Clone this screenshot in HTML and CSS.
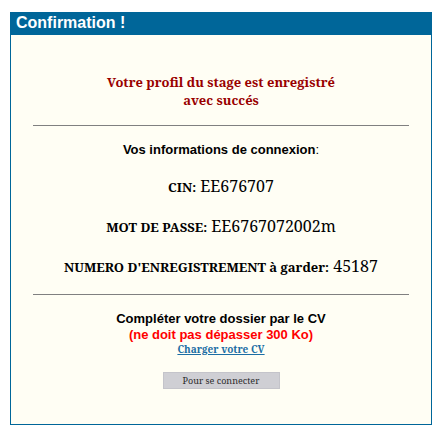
FILE: index.html
```html
<!DOCTYPE html>
<html lang="fr">
<head>
<meta charset="utf-8">
<title>Confirmation</title>
<link rel="stylesheet" href="styles.css">
</head>
<body>
<div class="panel">
  <div class="panel-head">Confirmation !</div>
  <div class="panel-body">
    <p class="success">Votre profil du stage est enregistré<br>avec succés</p>
    <hr class="sep">
    <p class="info-title"><b>Vos informations de connexion</b>:</p>
    <p class="field"><span class="label">CIN:</span> <span class="value">EE676707</span></p>
    <p class="field"><span class="label">MOT DE PASSE:</span> <span class="value">EE6767072002m</span></p>
    <p class="field"><span class="label">NUMERO D'ENREGISTREMENT à garder:</span> <span class="value">45187</span></p>
    <hr class="sep sep-bottom">
    <div class="cv">
      <div class="cv-title">Compléter votre dossier par le CV</div>
      <div class="cv-limit">(ne doit pas dépasser 300 Ko)</div>
      <div class="cv-line"><a class="cv-link" href="#">Charger votre CV</a></div>
    </div>
    <div class="actions"><button class="btn" type="button">Pour se connecter</button></div>
  </div>
</div>
</body>
</html>
```
FILE: styles.css
```css
html, body { margin: 0; padding: 0; background: #ffffff; }
body { font-family: "Noto Serif", "DejaVu Serif Condensed", serif; }
.panel {
  margin: 12px 10px 0 10px;
  border: 1px solid #006699;
  background: #fffef4;
  height: 413px;
  box-sizing: border-box;
}
.panel-head {
  background: #006699;
  color: #ffffff;
  font-family: "Liberation Sans", Arial, sans-serif;
  font-weight: bold;
  font-size: 16px;
  height: 22px;
  line-height: 20px;
  padding-left: 5px;
}
.panel-body { text-align: center; padding: 0 22px; }
.success {
  margin: 38px 0 0 0;
  color: #990000;
  font-weight: bold;
  font-size: 13px;
  line-height: 18px;
}
.sep {
  border: 0;
  border-top: 1px solid #808080;
  margin: 16px 0 0 0;
  height: 0;
}
.info-title {
  font-family: "Liberation Sans", Arial, sans-serif;
  font-size: 13px;
  margin: 16px 0 0 0;
  line-height: 16px;
}
.field { margin: 17px 0 0 0; line-height: 22px; }
.label { font-weight: bold; font-size: 13px; }
.value { font-size: 16px; }
.cv { margin-top: 16px; line-height: 16px; font-size: 10px; }
.cv-title { font-family: "Liberation Sans", Arial, sans-serif; font-weight: bold; font-size: 13px; color: #000; }
.cv-limit { font-family: "Liberation Sans", Arial, sans-serif; font-weight: bold; font-size: 13px; color: #ff0000; }
.cv-line { line-height: 12px; }
.cv-link { font-weight: bold; font-size: 10px; color: #1c6ea4; text-decoration: underline; }
.actions { margin-top: 17px; line-height: 0; }
.btn {
  font-family: "Noto Serif", "DejaVu Serif Condensed", serif;
  font-size: 9px;
  line-height: 15px;
  background: #cfcfd4;
  border: 1px solid #c4c4ca;
  width: 117px;
  height: 17px;
  padding: 0;
  color: #2a2a2a;
}
```
